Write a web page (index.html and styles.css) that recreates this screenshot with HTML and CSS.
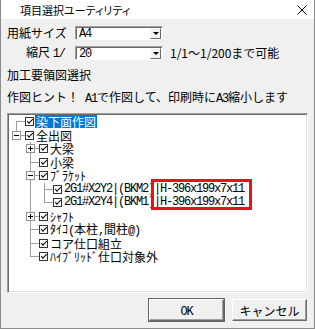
FILE: index.html
```html
<!DOCTYPE html>
<html lang="ja">

<head>
    <meta charset="UTF-8">
    <meta name="viewport" content="width=device-width, initial-scale=1.0">
    <title>項目選択ユーティリティ</title>
    <link rel="stylesheet" href="styles.css">
</head>

<body>
    <div class="window">
        <div class="titlebar">
            <span class="title">項目選択ユーティリティ</span>
            <svg class="close" width="10" height="10" viewBox="0 0 10 10">
                <path d="M0.5 0.5L9.5 9.5M9.5 0.5L0.5 9.5" stroke="#000" stroke-width="1" fill="none"/>
            </svg>
        </div>
        <div class="client">
            <div class="form-row">
                <label class="lbl">用紙サイズ</label>
                <div class="combo"><span class="combo-text mono">A4</span><span class="combo-btn"></span></div>
            </div>
            <div class="form-row">
                <label class="lbl scale">縮尺 <span class="mono">1/</span></label>
                <div class="combo"><span class="combo-text mono">20</span><span class="combo-btn"></span></div>
                <span class="note">1/1～1/200まで可能</span>
            </div>
            <div class="section">加工要領図選択</div>
            <div class="hint">作図ヒント！<span class="mono"> A1</span>で作図して、印刷時に<span class="mono">A3</span>縮小します</div>

            <div class="tree">
                <div class="node">
                    <span class="conn first"></span><span class="cb"></span>
                    <span class="label sel">染下面作図</span>
                </div>
                <div class="node">
                    <span class="conn last"><span class="exp"></span></span><span class="cb"></span>
                    <span class="label">全出図</span>
                </div>
                <div class="node">
                    <span class="ind"></span>
                    <span class="conn tee"><span class="exp plus"></span></span><span class="cb"></span>
                    <span class="label">大梁</span>
                </div>
                <div class="node">
                    <span class="ind"></span>
                    <span class="conn tee"></span><span class="cb"></span>
                    <span class="label">小梁</span>
                </div>
                <div class="node">
                    <span class="ind"></span>
                    <span class="conn tee"><span class="exp"></span></span><span class="cb"></span>
                    <span class="label">ﾌﾞﾗｹｯﾄ</span>
                </div>
                <div class="node">
                    <span class="ind"></span><span class="ind pipe"></span>
                    <span class="conn tee"></span><span class="cb"></span>
                    <span class="label code">2G1#X2Y2|(BKM2)|H-396x199x7x11</span>
                </div>
                <div class="node">
                    <span class="ind"></span><span class="ind pipe"></span>
                    <span class="conn last"></span><span class="cb"></span>
                    <span class="label code">2G1#X2Y4|(BKM1)|H-396x199x7x11</span>
                </div>
                <div class="node">
                    <span class="ind"></span>
                    <span class="conn tee"><span class="exp plus"></span></span><span class="cb"></span>
                    <span class="label">ｼｬﾌﾄ</span>
                </div>
                <div class="node">
                    <span class="ind"></span>
                    <span class="conn tee"></span><span class="cb"></span>
                    <span class="label">ﾀｲｺ<span class="mono">(</span>本柱<span class="mono">,</span>間柱<span class="mono">@)</span></span>
                </div>
                <div class="node">
                    <span class="ind"></span>
                    <span class="conn tee"></span><span class="cb"></span>
                    <span class="label">コア仕口組立</span>
                </div>
                <div class="node">
                    <span class="ind"></span>
                    <span class="conn last"></span><span class="cb"></span>
                    <span class="label">ﾊｲﾌﾞﾘｯﾄﾞ仕口対象外</span>
                </div>
                <!-- red mark drawn over the section sizes -->
                <div class="callout"></div>
            </div>

            <div class="buttons">
                <button class="btn default"><span class="mono">OK</span></button>
                <button class="btn">キャンセル</button>
            </div>
        </div>
    </div>
</body>

</html>
```

FILE: styles.css
```css
* {
    box-sizing: border-box;
}

body {
    margin: 0;
    background-color: #f0f0f0;
    color: #000;
    font-family: "Noto Sans CJK JP", sans-serif;
    font-size: 12px;
}

.window {
    width: 315px;
    height: 329px;
    background-color: #f0f0f0;
    border: 1px solid #8c8c8c;
    border-top: none;
    display: flex;
    flex-direction: column;
}

.titlebar {
    height: 19px;
    background-color: #fff;
    display: flex;
    align-items: center;
    justify-content: space-between;
    padding: 0 7px 0 19px;
    font-size: 11px;
    font-feature-settings: "palt";
}

.client {
    flex: 1;
    padding: 7px 6px 0 6px;
}

.mono {
    font-family: "Liberation Mono", monospace;
    font-size: 12px;
    letter-spacing: -1.2px;
}

.form-row {
    display: flex;
    align-items: center;
    height: 14px;
    line-height: 14px;
}

.form-row + .form-row {
    margin-top: 6px;
}

.lbl {
    width: 68px;
    white-space: nowrap;
}

.lbl.scale {
    padding-left: 19px;
}

.combo {
    width: 88px;
    height: 14px;
    background-color: #fff;
    border: 1px solid;
    border-color: #a0a0a0 #fff #fff #a0a0a0;
    box-shadow: inset 1px 1px #696969;
    display: flex;
    align-items: center;
    padding: 1px 1px 0 3px;
}

.combo-text {
    flex: 1;
}

.combo-btn {
    width: 11px;
    height: 11px;
    background-color: #f0f0f0;
    border: 1px solid;
    border-color: #fff #696969 #696969 #fff;
    display: flex;
    align-items: center;
    justify-content: center;
}

.combo-btn::after {
    content: "";
    border-left: 3px solid transparent;
    border-right: 3px solid transparent;
    border-top: 3px solid #000;
}

.note {
    margin-left: 7px;
    white-space: nowrap;
}

.section {
    margin-top: 8px;
    line-height: 14px;
}

.hint {
    margin-top: 8px;
    line-height: 14px;
    white-space: nowrap;
}

/* tree view */
.tree {
    position: relative;
    height: 180px;
    margin-top: 7px;
    background-color: #fff;
    border: 1px solid;
    border-color: #a0a0a0 #fff #fff #a0a0a0;
    box-shadow: inset 1px 1px #696969, inset -1px -1px #e3e3e3;
    padding: 1px;
    overflow: hidden;
}

.node {
    display: flex;
    align-items: center;
    height: 13.5px;
}

.ind {
    flex: none;
    width: 14px;
    height: 100%;
}

.conn {
    flex: none;
    width: 16px;
    height: 100%;
    display: flex;
    align-items: center;
    padding-left: 3px;
}

.pipe {
    background: linear-gradient(#a0a0a0, #a0a0a0) 7px 0 / 1px 100% no-repeat;
}

.tee {
    background:
        linear-gradient(#a0a0a0, #a0a0a0) 7px 0 / 1px 100% no-repeat,
        linear-gradient(#a0a0a0, #a0a0a0) 7px 50% / 9px 1px no-repeat;
}

.last {
    background:
        linear-gradient(#a0a0a0, #a0a0a0) 7px 0 / 1px 50% no-repeat,
        linear-gradient(#a0a0a0, #a0a0a0) 7px 50% / 9px 1px no-repeat;
}

.first {
    background:
        linear-gradient(#a0a0a0, #a0a0a0) 7px 100% / 1px 50% no-repeat,
        linear-gradient(#a0a0a0, #a0a0a0) 7px 50% / 9px 1px no-repeat;
}

.exp {
    position: relative;
    width: 9px;
    height: 9px;
    background-color: #fff;
    border: 1px solid #919191;
}

.exp::before,
.exp.plus::after {
    content: "";
    position: absolute;
    background-color: #000;
}

.exp::before {
    left: 1px;
    top: 3px;
    width: 5px;
    height: 1px;
}

.exp.plus::after {
    left: 3px;
    top: 1px;
    width: 1px;
    height: 5px;
}

.cb {
    flex: none;
    width: 9px;
    height: 9px;
    background-color: #fff;
    border: 1px solid #333;
    display: flex;
    align-items: center;
    justify-content: center;
}

.cb::after {
    content: "";
    width: 5px;
    height: 2px;
    border-left: 1.5px solid #000;
    border-bottom: 1.5px solid #000;
    transform: translateY(-1px) rotate(-45deg);
}

.label {
    margin-left: 1px;
    padding: 0 1px;
    line-height: 13px;
    white-space: nowrap;
}

.label.sel {
    background-color: #0078d7;
    color: #fff;
}

.label.code {
    font-family: "Liberation Mono", monospace;
    letter-spacing: -1.2px;
}

.callout {
    position: absolute;
    left: 143px;
    top: 65px;
    width: 101px;
    height: 31px;
    border: 3px solid #e3141c;
}

/* dialog buttons */
.buttons {
    display: flex;
    justify-content: flex-end;
    gap: 8px;
    margin-top: 6px;
    padding-right: 1px;
}

.btn {
    width: 75px;
    height: 22px;
    padding: 0;
    background-color: #f0f0f0;
    border: 1px solid;
    border-color: #fff #696969 #696969 #fff;
    box-shadow: inset -1px -1px #a0a0a0;
    font-family: "Noto Sans CJK JP", sans-serif;
    font-size: 12px;
    color: #000;
}

.btn.default {
    outline: 1px solid #646464;
}
```
